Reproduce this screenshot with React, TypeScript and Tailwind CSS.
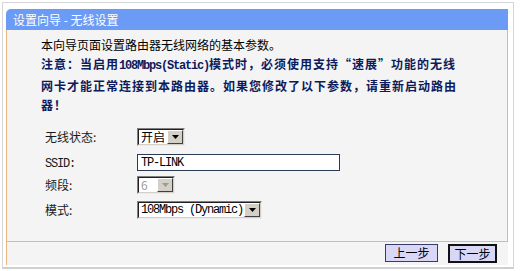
import React from "react";

const cjk = "font-['SimSun','Noto_Sans_CJK_SC',sans-serif]";

interface SelectBoxProps {
  value: React.ReactNode;
  widthClass: string;
  disabled?: boolean;
}

const Arrow = ({ disabled }: { disabled?: boolean }) => (
  <div className="flex h-full w-[16px] items-center justify-center border border-t-[#ffffff] border-l-[#ffffff] border-b-[#404040] border-r-[#404040] bg-[#d4d0c8]">
    <svg width="7" height="4" viewBox="0 0 7 4">
      <polygon points="0,0 7,0 3.5,4" fill={disabled ? "#9a9a9a" : "#000"} />
    </svg>
  </div>
);

const SelectBox: React.FC<SelectBoxProps> = ({ value, widthClass, disabled }) => (
  <div
    className={`${widthClass} h-[18px] border border-t-[#808080] border-l-[#808080] border-b-[#ececec] border-r-[#ececec]`}
  >
    <div className="flex h-full border border-t-[#202020] border-l-[#202020] border-b-[#d4d0c8] border-r-[#d4d0c8] bg-white">
      <div
        className={`flex flex-1 items-center pl-[2px] text-[12px] leading-none ${
          disabled ? "text-[#a0a0a0]" : "text-black"
        }`}
      >
        {value}
      </div>
      <Arrow disabled={disabled} />
    </div>
  </div>
);

const Mono = ({ children, bold }: { children: React.ReactNode; bold?: boolean }) => (
  <span
    className={`font-['Liberation_Mono',monospace] text-[12px] tracking-[-1.2px] ${
      bold ? "font-bold" : "font-normal"
    }`}
  >
    {children}
  </span>
);

const Row = ({
  label,
  top,
  children,
}: {
  label: React.ReactNode;
  top: string;
  children: React.ReactNode;
}) => (
  <div className={`flex items-center ${top}`}>
    <div className="w-[92px] text-[12px] leading-none text-[#1a1a1a]">{label}</div>
    {children}
  </div>
);

export default function App() {
  return (
    <div className={`h-[271px] w-[521px] bg-white pl-[2px] pt-[2px] ${cjk}`}>
      <div className="h-[267px] w-[512px] border border-[#d6d6d6] border-b-2 border-b-[#cfcfcf] pl-[3px] pt-[6px]">
        <div className="w-[502px]">
          {/* title bar */}
          <div className="h-[21px] rounded-tl-[5px] bg-[#6b9bf4] pl-[7px] text-[12px] leading-[21px] text-white whitespace-pre">
            设置向导 - 无线设置
          </div>

          {/* body */}
          <div className="h-[211px] border-x border-[#e8b67f] bg-[#f4f4f4] pl-[34px] pt-[5px]">
            <p className="whitespace-nowrap text-[12px] leading-[19px] text-black">
              本向导页面设置路由器无线网络的基本参数。
            </p>
            <p className="whitespace-nowrap text-[12px] font-bold leading-[19px] tracking-[1px] text-[#0d1a5c]">
              注意：当启用<Mono bold>108Mbps(Static)</Mono>模式时，必须使用支持“速展”功能的无线
              <br />
              网卡才能正常连接到本路由器。如果您修改了以下参数，请重新启动路由
              <br />
              器！
            </p>

            <div className="pl-[4px]">
              <Row label="无线状态:" top="mt-[14px]">
                <SelectBox value="开启" widthClass="w-[48px]" />
              </Row>
              <Row label={<Mono>SSID:</Mono>} top="mt-[8px]">
                <div className="flex h-[17px] w-[203px] items-center border border-[#2b3a55] bg-white pl-[3px] text-black">
                  <Mono>TP-LINK</Mono>
                </div>
              </Row>
              <Row label="频段:" top="mt-[5px]">
                <SelectBox value="6" widthClass="w-[38px]" disabled />
              </Row>
              <Row label="模式:" top="mt-[7px]">
                <SelectBox value={<Mono>108Mbps (Dynamic)</Mono>} widthClass="w-[125px]" />
              </Row>
            </div>
          </div>

          {/* footer */}
          <div className="flex h-[24px] justify-end gap-[10px] border-l border-t border-[#e8b67f] bg-[#f4f4f4] pr-[11px] pt-[2px]">
            <button className="h-[18px] w-[53px] border border-[#3a3a6a] bg-[#d8d8f6] text-[12px] leading-none text-black">
              上一步
            </button>
            <button className="h-[19px] w-[49px] border-2 border-[#111] bg-[#d8d8f6] text-[12px] leading-none text-black">
              下一步
            </button>
          </div>
        </div>
      </div>
    </div>
  );
}
